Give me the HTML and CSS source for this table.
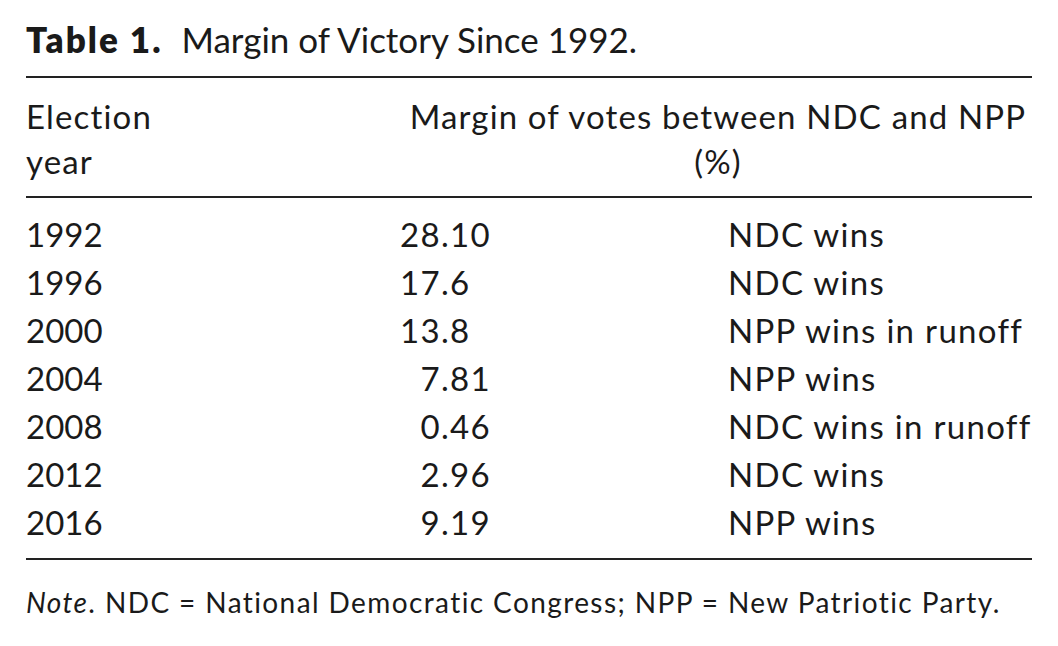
FILE: index.html
```html
<!DOCTYPE html>
<html lang="en">
<head>
<meta charset="utf-8">
<title>Table 1. Margin of Victory Since 1992.</title>
<link rel="stylesheet" href="styles.css">
</head>
<body>
<div class="page">
  <h1 class="caption"><span class="label">Table 1.</span> Margin of Victory Since 1992.</h1>
  <table class="data">
    <thead>
      <tr>
        <th class="c-year">Election<br>year</th>
        <th class="c-span" colspan="2">Margin of votes between NDC and NPP<br>(%)</th>
      </tr>
    </thead>
    <tbody>
      <tr><td class="c-year">1992</td><td class="c-num"><span class="int">28</span><span class="frac">.10</span></td><td class="c-res">NDC wins</td></tr>
      <tr><td class="c-year">1996</td><td class="c-num"><span class="int">17</span><span class="frac">.6</span></td><td class="c-res">NDC wins</td></tr>
      <tr><td class="c-year">2000</td><td class="c-num"><span class="int">13</span><span class="frac">.8</span></td><td class="c-res">NPP wins in runoff</td></tr>
      <tr><td class="c-year">2004</td><td class="c-num"><span class="int">7</span><span class="frac">.81</span></td><td class="c-res">NPP wins</td></tr>
      <tr><td class="c-year">2008</td><td class="c-num"><span class="int">0</span><span class="frac">.46</span></td><td class="c-res">NDC wins in runoff</td></tr>
      <tr><td class="c-year">2012</td><td class="c-num"><span class="int">2</span><span class="frac">.96</span></td><td class="c-res">NDC wins</td></tr>
      <tr><td class="c-year">2016</td><td class="c-num"><span class="int">9</span><span class="frac">.19</span></td><td class="c-res">NPP wins</td></tr>
    </tbody>
  </table>
  <p class="note"><em>Note</em>. NDC = National Democratic Congress; NPP = New Patriotic Party.</p>
</div>
</body>
</html>
```
FILE: styles.css
```css
html, body {
  margin: 0;
  padding: 0;
  background: #ffffff;
}

body {
  font-family: Lato, "Open Sans", "Liberation Sans", sans-serif;
  color: #1a1a1a;
}

.page {
  width: 1006px;
  padding: 17px 26px 0 26px;
}

.caption {
  margin: 0 0 15px 0;
  font-size: 35px;
  line-height: 44px;
  font-weight: 400;
  letter-spacing: 0;
}

.caption .label {
  font-weight: 800;
  letter-spacing: 2px;
  margin-right: 10px;
}

.data {
  width: 1006px;
  border-collapse: collapse;
  border-top: 2px solid #222;
  border-bottom: 2px solid #222;
  font-size: 33px;
  letter-spacing: 1.3px;
}

.data th {
  font-weight: 400;
  line-height: 45px;
  padding: 16px 0 12px 0;
  border-bottom: 2px solid #222;
  vertical-align: top;
  letter-spacing: 1.15px;
}

.data th.c-year {
  text-align: left;
  width: 372px;
}

.data th.c-span {
  text-align: center;
  padding-left: 6px;
}

.data td {
  line-height: 48px;
  padding: 0;
  vertical-align: top;
}

.data tbody tr:first-child td {
  padding-top: 12px;
}

.data tbody tr:last-child td {
  padding-bottom: 12px;
}

.c-year {
  width: 372px;
  text-align: left;
}

td.c-year {
  letter-spacing: 0;
}

.c-num {
  width: 330px;
  white-space: nowrap;
}

.int {
  display: inline-block;
  width: 43px;
  text-align: right;
}

.c-res {
  width: 304px;
  white-space: nowrap;
}

.note {
  margin: 24px 0 0 0;
  font-size: 28px;
  line-height: 36px;
  letter-spacing: 1.4px;
}

.note em {
  font-style: italic;
}
```
